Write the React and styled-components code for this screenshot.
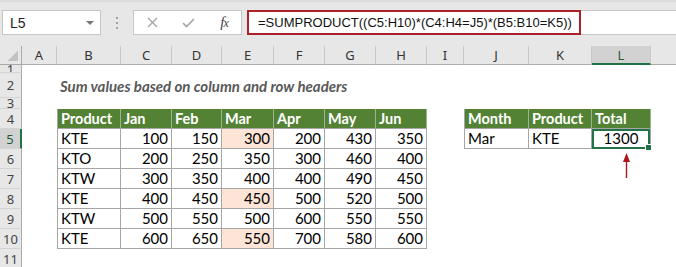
import { Fragment } from "react";
import styled, { createGlobalStyle, css } from "styled-components";

const GlobalStyle = createGlobalStyle`
  html, body {
    margin: 0;
    padding: 0;
    background: #fff;
  }
  body {
    font-family: "Liberation Sans", Arial, sans-serif;
  }
`;

const COLS = [
  ["A", 35],
  ["B", 64],
  ["C", 51],
  ["D", 50],
  ["E", 52],
  ["F", 51],
  ["G", 51],
  ["H", 51],
  ["I", 37],
  ["J", 65],
  ["K", 63],
  ["L", 59],
  ["M", 64],
];
const ROWS = [1, 2, 3, 4, 5, 6, 7, 8, 9, 10, 11];

const Pantalla = styled.div`
  width: 676px;
  height: 267px;
  overflow: hidden;
  background: #fff;
`;

const BarraFormula = styled.div`
  display: flex;
  height: 46px;
  box-sizing: border-box;
  padding: 10px 0 11px 2px;
  background: #e7e7e7;
  box-shadow: inset 0 2px 0 #dcdcdc;
`;

const CajaNombre = styled.div`
  width: 99px;
  box-sizing: border-box;
  background: #fff;
  border: 1px solid #c6c6c6;
  display: flex;
  align-items: center;
  justify-content: space-between;
  padding: 0 6px 0 7px;
  font-size: 14px;
  color: #222;
`;

const Flechita = styled.span`
  width: 0;
  height: 0;
  border-left: 4px solid transparent;
  border-right: 4px solid transparent;
  border-top: 4px solid #777;
`;

const Puntos = styled.div`
  width: 32px;
  display: flex;
  flex-direction: column;
  align-items: center;
  justify-content: center;
  gap: 3px;
  span {
    width: 2px;
    height: 2px;
    background: #a2a2a2;
  }
`;

const CajaFx = styled.div`
  width: 109px;
  box-sizing: border-box;
  background: #fff;
  border: 1px solid #c6c6c6;
  display: grid;
  grid-template-columns: repeat(3, 36px);
  align-items: center;
  justify-items: center;
`;

const Fx = styled.span`
  font-family: "Liberation Serif", "Times New Roman", serif;
  font-style: italic;
  font-size: 15px;
  color: #444;
  letter-spacing: -1px;
  small {
    font-size: 12px;
  }
`;

const Entrada = styled.div`
  flex: 1;
  margin-left: 5px;
  display: flex;
  background: #fff;
  border: 1px solid #c6c6c6;
  border-right: none;
`;

const Recuadro = styled.div`
  width: 334px;
  box-sizing: border-box;
  margin: -1px 0 -1px -1px;
  border: 2px solid #ad2229;
  display: flex;
  align-items: center;
  padding-left: 9px;
  font-size: 13px;
  color: #111;
  white-space: nowrap;
`;

const Hoja = styled.div`
  display: grid;
  grid-template-columns: ${(p) => p.$cols};
  grid-template-rows: 19px 8px 25px 11px repeat(8, 20px);
  width: 740px;
`;

const Esquina = styled.div`
  position: relative;
  background: #e7e7e7;
  border-right: 1px solid #ababab;
  border-bottom: 1px solid #ababab;
  &::after {
    content: "";
    position: absolute;
    right: 3px;
    bottom: 3px;
    width: 11px;
    height: 11px;
    background: linear-gradient(to bottom right, transparent 50%, #c2c2c2 50%);
  }
`;

const encabezado = css`
  box-sizing: border-box;
  display: flex;
  align-items: center;
  justify-content: center;
  overflow: hidden;
  font-family: "Noto Sans", "Liberation Sans", sans-serif;
  font-size: 13px;
`;

const ColHead = styled.div`
  ${encabezado}
  background: ${(p) => (p.$active ? "#d2d2d2" : "#e7e7e7")};
  border-right: 1px solid #c9c9c9;
  border-bottom: ${(p) => (p.$active ? "2px solid #217346" : "1px solid #ababab")};
  color: ${(p) => (p.$active ? "#1f5c36" : "#333")};
`;

const RowHead = styled.div`
  ${encabezado}
  background: ${(p) => (p.$active ? "#d2d2d2" : "#e7e7e7")};
  border-right: ${(p) => (p.$active ? "2px solid #217346" : "1px solid #ababab")};
  border-bottom: 1px solid #d3d3d3;
  color: ${(p) => (p.$active ? "#1f5c36" : "#444")};
`;

const Celda = styled.div`
  position: relative;
  box-sizing: border-box;
  display: flex;
  align-items: flex-end;
  justify-content: ${(p) =>
    p.$align === "right" ? "flex-end" : p.$align === "center" ? "center" : "flex-start"};
  padding: 0 3px 2px 3px;
  font-family: Lato, "Liberation Sans", sans-serif;
  font-size: ${(p) => (p.$head ? "14.5px" : "15px")};
  line-height: 15px;
  white-space: nowrap;
  color: ${(p) => (p.$head ? "#fff" : "#000")};
  font-weight: ${(p) => (p.$head ? 700 : 400)};
  background: ${(p) => (p.$head ? "#548235" : p.$hl ? "#fce4d6" : "transparent")};
  ${(p) =>
    p.$boxed &&
    css`
      border-right: 1px solid ${p.$head ? "#9fb38f" : "#a6a6a6"};
      border-bottom: 1px solid #a6a6a6;
    `}
  ${(p) =>
    p.$edge &&
    css`
      border-left: 1px solid #a6a6a6;
    `}
`;

const Titulo = styled.span`
  font-weight: 700;
  font-style: italic;
  color: #595959;
  padding-bottom: 2px;
`;

const Seleccion = styled.span`
  position: absolute;
  inset: 0 0 -1px 0;
  border: 2px solid #217346;
  pointer-events: none;
  &::after {
    content: "";
    position: absolute;
    right: -4px;
    bottom: -4px;
    width: 5px;
    height: 5px;
    background: #217346;
    border: 1px solid #fff;
  }
`;

const Flecha = styled.svg`
  position: absolute;
  left: 30px;
  top: 4px;
`;

const cells = {};
cells.B2 = { title: "Sum values based on column and row headers" };

const encabezados = ["Product", "Jan", "Feb", "Mar", "Apr", "May", "Jun"];
const letrasTabla = ["B", "C", "D", "E", "F", "G", "H"];
encabezados.forEach((t, i) => {
  cells[letrasTabla[i] + 4] = { v: t, head: true, edge: i === 0 };
});

const datos = [
  ["KTE", 100, 150, 300, 200, 430, 350],
  ["KTO", 200, 250, 350, 300, 460, 400],
  ["KTW", 300, 350, 400, 400, 490, 450],
  ["KTE", 400, 450, 450, 500, 520, 500],
  ["KTW", 500, 550, 500, 600, 550, 550],
  ["KTE", 600, 650, 550, 700, 580, 600],
];
datos.forEach((fila, r) => {
  fila.forEach((v, i) => {
    const col = letrasTabla[i];
    cells[col + (r + 5)] = {
      v,
      edge: i === 0,
      align: i === 0 ? "left" : "right",
      hl: col === "E" && fila[0] === "KTE",
    };
  });
});

cells.J4 = { v: "Month", head: true, edge: true };
cells.K4 = { v: "Product", head: true };
cells.L4 = { v: "Total", head: true };
cells.J5 = { v: "Mar", edge: true };
cells.K5 = { v: "KTE" };
cells.L5 = { v: 1300, align: "center", selected: true };
cells.L6 = { arrow: true };

const plantilla = `22px ${COLS.map((c) => c[1] + "px").join(" ")}`;

const App = () => {
  return (
    <>
      <GlobalStyle />
      <Pantalla>
        <BarraFormula>
          <CajaNombre>
            L5
            <Flechita />
          </CajaNombre>
          <Puntos>
            <span />
            <span />
            <span />
          </Puntos>
          <CajaFx>
            <svg width="11" height="11" viewBox="0 0 11 11">
              <path d="M1 1 L10 10 M10 1 L1 10" stroke="#a3a3a3" strokeWidth="1.3" />
            </svg>
            <svg width="13" height="10" viewBox="0 0 13 10">
              <path d="M1 5 L4.5 8.5 L12 1" stroke="#a3a3a3" strokeWidth="1.6" fill="none" />
            </svg>
            <Fx>
              f<small>x</small>
            </Fx>
          </CajaFx>
          <Entrada>
            <Recuadro>=SUMPRODUCT((C5:H10)*(C4:H4=J5)*(B5:B10=K5))</Recuadro>
          </Entrada>
        </BarraFormula>

        <Hoja $cols={plantilla}>
          <Esquina />
          {COLS.map(([c]) => (
            <ColHead key={c} $active={c === "L"}>
              {c === "M" ? "" : c}
            </ColHead>
          ))}
          {ROWS.map((r) => (
            <Fragment key={r}>
              <RowHead $active={r === 5}>{r}</RowHead>
              {COLS.map(([c]) => {
                const d = cells[c + r];
                if (!d) return <Celda key={c} />;
                const enTabla = d.v !== undefined;
                return (
                  <Celda
                    key={c}
                    $head={d.head}
                    $hl={d.hl}
                    $align={d.align}
                    $boxed={enTabla}
                    $edge={d.edge}
                  >
                    {d.title && <Titulo>{d.title}</Titulo>}
                    {d.v}
                    {d.selected && <Seleccion />}
                    {d.arrow && (
                      <Flecha width="9" height="25" viewBox="0 0 9 25">
                        <path d="M4.5 0 L8 9 L1 9 Z" fill="#b0141c" />
                        <path d="M4.5 8 L4.5 25" stroke="#b0141c" strokeWidth="1.4" />
                      </Flecha>
                    )}
                  </Celda>
                );
              })}
            </Fragment>
          ))}
        </Hoja>
      </Pantalla>
    </>
  );
};

export default App;
